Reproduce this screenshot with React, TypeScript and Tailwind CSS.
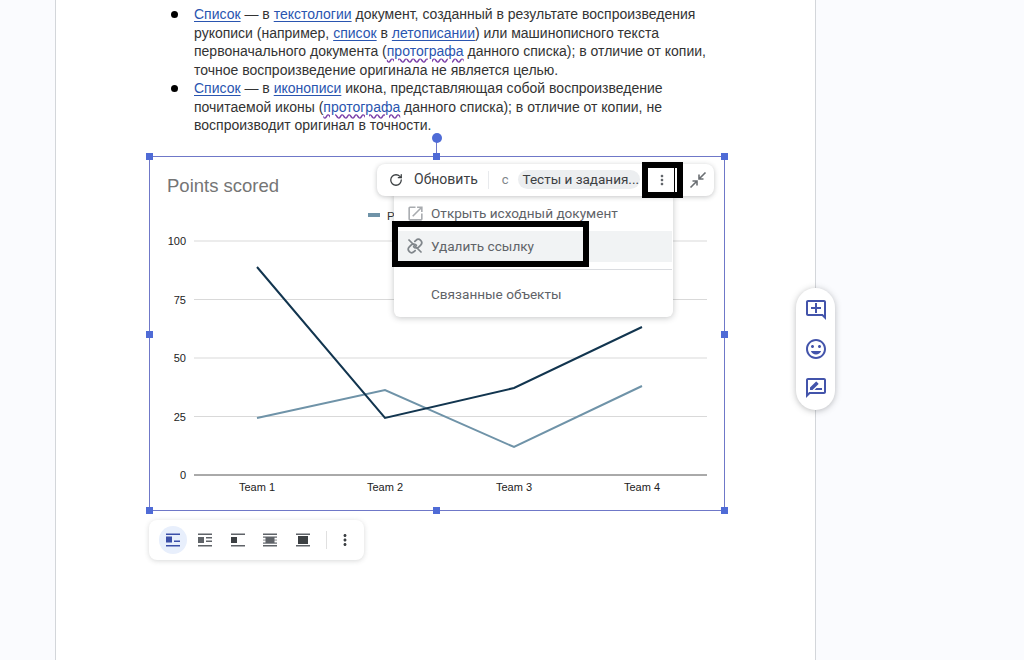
import { RotateCw } from 'lucide-react';
import { MdOutlineAddComment, MdOutlineInsertEmoticon, MdOutlineRateReview, MdOutlineOpenInNew, MdMoreVert } from 'react-icons/md';

const linkClass = 'text-[#2a55b0] underline underline-offset-2';
const misspelled = 'text-[#2a55b0] underline decoration-wavy decoration-[#7a3fa8] underline-offset-2';

function Handle({ className }: { className: string }) {
  return <div className={`absolute w-[7px] h-[7px] bg-[#4f6bd6] ${className}`} />;
}

function Bullet() {
  return <span className="ml-[22px] mt-[6px] mr-[16px] w-[7px] h-[7px] rounded-full bg-black shrink-0" />;
}

function UnlinkIcon() {
  return (
    <svg className="w-[16px] h-[16px] text-[#80868b]" viewBox="0 0 24 24" fill="none" stroke="currentColor" strokeWidth="2.6" strokeLinecap="round">
      <path d="M10 13a5 5 0 0 0 7.54.54l3-3a5 5 0 0 0-7.07-7.07l-1.72 1.71" />
      <path d="M14 11a5 5 0 0 0-7.54-.54l-3 3a5 5 0 0 0 7.07 7.07l1.71-1.71" />
      <path d="M3 3l18 18" />
    </svg>
  );
}

function CollapseIcon() {
  return (
    <svg className="w-[18px] h-[18px] text-[#6b6f73]" viewBox="0 0 18 18" fill="none" stroke="currentColor" strokeWidth="1.6">
      <path d="M16.5 1.5L10 8M10 3.5V8H14.5" />
      <path d="M1.5 16.5L8 10M8 14.5V10H3.5" />
    </svg>
  );
}

function WrapIcon({ kind, active }: { kind: number; active?: boolean }) {
  const c = active ? '#3b4fa8' : '#5f6368';
  return (
    <div className={`w-7 h-7 rounded-full flex items-center justify-center ${active ? 'bg-[#e8effc]' : ''}`}>
      <svg width="16" height="16" viewBox="0 0 16 16">
        {kind === 0 && (
          <g fill={c}>
            <rect x="1" y="1.5" width="14" height="1.5" />
            <rect x="1" y="4.5" width="6" height="6" />
            <rect x="9" y="8.5" width="6" height="1.5" />
            <rect x="1" y="13" width="14" height="1.5" />
          </g>
        )}
        {kind === 1 && (
          <g fill={c}>
            <rect x="1" y="1.5" width="14" height="1.5" />
            <rect x="1" y="5" width="6" height="6" />
            <rect x="9" y="5" width="6" height="1.5" />
            <rect x="9" y="8.5" width="6" height="1.5" />
            <rect x="1" y="13" width="14" height="1.5" />
          </g>
        )}
        {kind === 2 && (
          <g fill={c}>
            <rect x="1" y="1.5" width="14" height="1.5" />
            <rect x="1" y="5" width="6" height="6" fill="#3c4043" />
            <rect x="1" y="13" width="14" height="1.5" />
          </g>
        )}
        {kind === 3 && (
          <g fill={c}>
            <rect x="1" y="1.5" width="14" height="1.5" />
            <rect x="1" y="4.5" width="14" height="1.2" />
            <rect x="3.5" y="5" width="9" height="6" />
            <rect x="1" y="7.5" width="14" height="1.2" fillOpacity="0.6" />
            <rect x="1" y="10.5" width="14" height="1.2" />
            <rect x="1" y="13" width="14" height="1.5" />
          </g>
        )}
        {kind === 4 && (
          <g fill={c}>
            <rect x="1" y="1.5" width="14" height="1.5" />
            <rect x="3" y="4" width="10" height="8" fill="#3c4043" />
            <rect x="1" y="13" width="14" height="1.5" />
          </g>
        )}
      </svg>
    </div>
  );
}

function Chart() {
  const grid = [
    { y: 241, label: '100' },
    { y: 299.5, label: '75' },
    { y: 358, label: '50' },
    { y: 416.5, label: '25' },
  ];
  const teams = [
    { x: 257, label: 'Team 1' },
    { x: 385, label: 'Team 2' },
    { x: 514, label: 'Team 3' },
    { x: 642, label: 'Team 4' },
  ];
  return (
    <svg className="block w-full h-full" viewBox="150 157 574 353" fontFamily="'Liberation Sans', sans-serif">
      <text x="167" y="192" fontSize="18.5" fill="#757575">Points scored</text>
      <rect x="368" y="213" width="12" height="4" fill="#6f93a8" />
      <text x="387" y="220" fontSize="11.5" fill="#333">P</text>
      {grid.map((g) => (
        <g key={g.y}>
          <line x1="194" x2="707" y1={g.y} y2={g.y} stroke="#d9d9d9" />
          <text x="186" y={g.y + 4} fontSize="11" fill="#222" textAnchor="end">{g.label}</text>
        </g>
      ))}
      <line x1="194" x2="707" y1="475" y2="475" stroke="#555" />
      <text x="186" y="479" fontSize="11" fill="#222" textAnchor="end">0</text>
      <polyline points="257,418 385,390 514,447 642,386" fill="none" stroke="#6f93a8" strokeWidth="2" />
      <polyline points="257,267 385,418 514,388 642,327" fill="none" stroke="#12354f" strokeWidth="2" />
      {teams.map((t) => (
        <text key={t.x} x={t.x} y="491" fontSize="11" fill="#222" textAnchor="middle">{t.label}</text>
      ))}
    </svg>
  );
}

export default function App() {
  return (
    <div className="relative w-[1024px] h-[660px] overflow-hidden bg-[#fafbfe] font-['Liberation_Sans',sans-serif]">
      <div className="ml-[55px] w-[761px] h-full bg-white border-x border-[#d3d6da] pt-[5px] pl-[93px]">
        <ul className="w-[561px] text-[14px] leading-[18.5px] text-[#333]">
          <li className="flex">
            <Bullet />
            <span>
              <span className={linkClass}>Список</span> — в <span className={linkClass}>текстологии</span> документ, созданный в результате воспроизведения рукописи (например, <span className={linkClass}>список</span> в <span className={linkClass}>летописании</span>) или машинописного текста первоначального документа (<span className={misspelled}>протографа</span> данного списка); в отличие от копии, точное воспроизведение оригинала не является целью.
            </span>
          </li>
          <li className="flex">
            <Bullet />
            <span>
              <span className={linkClass}>Список</span> — в <span className={linkClass}>иконописи</span> икона, представляющая собой воспроизведение почитаемой иконы (<span className={misspelled}>протографа</span> данного списка); в отличие от копии, не воспроизводит оригинал в точности.
            </span>
          </li>
        </ul>

        {/* selected chart */}
        <div className="relative mt-[21px] w-[576px] h-[355px] border border-[#6f78c8]">
          <Chart />

          <div className="absolute left-[286px] top-[-19px] w-px h-[19px] bg-[#6f78c8]" />
          <div className="absolute left-[282px] top-[-24px] w-[10px] h-[10px] rounded-full bg-[#4f6bd6]" />
          <Handle className="left-[-4px] top-[-4px]" />
          <Handle className="left-[283px] top-[-4px]" />
          <Handle className="right-[-4px] top-[-4px]" />
          <Handle className="left-[-4px] top-[174px]" />
          <Handle className="right-[-4px] top-[174px]" />
          <Handle className="left-[-4px] bottom-[-4px]" />
          <Handle className="left-[283px] bottom-[-4px]" />
          <Handle className="right-[-4px] bottom-[-4px]" />

          {/* linked chart menu */}
          <div className="absolute left-[244px] top-[33px] w-[279px] h-[127px] bg-white rounded-md shadow-[0_1px_6px_rgba(60,64,67,0.3)] font-['Roboto',sans-serif] text-[13.6px] text-[#5f6368] pt-[14px] flex flex-col">
            <div className="flex items-center h-[20px] pl-[12px]">
              <MdOutlineOpenInNew className="w-[19px] h-[19px] text-[#a8abaf]" />
              <span className="ml-[6px]">Открыть исходный документ</span>
            </div>
            <div className="flex items-center h-[31px] mt-[7px] pl-[13px] bg-[#f1f3f4] mr-px">
              <UnlinkIcon />
              <span className="ml-[8px]">Удалить ссылку</span>
            </div>
            <div className="ml-[36px] mr-px mt-[7px] h-px bg-[#dadce0]" />
            <div className="flex items-center h-[20px] mt-[15px] pl-[37px]">Связанные объекты</div>
          </div>

          {/* linked chart toolbar */}
          <div className="absolute left-[227px] top-[7px] w-[337px] h-[32px] bg-white rounded-lg shadow-[0_1px_5px_rgba(60,64,67,0.3)] flex items-center font-['Roboto',sans-serif] text-[14px]">
            <RotateCw className="ml-[12px] w-[14px] h-[14px] text-[#3c4043]" strokeWidth={2.2} />
            <span className="ml-[11px] text-[#3c4043]">Обновить</span>
            <div className="ml-[10px] w-px h-[18px] bg-[#e8eaed]" />
            <span className="ml-[13px] text-[#80868b] text-[13px]">c</span>
            <span className="ml-[9px] w-[122px] h-[19px] rounded-full bg-[#eceef0] text-[#3c4043] text-[13.5px] pl-[5px] leading-[19px] whitespace-nowrap">Тесты и задания...</span>
            <MdMoreVert className="ml-[14px] w-[16px] h-[16px] text-[#5f6368]" />
            <div className="ml-[19px]"><CollapseIcon /></div>
          </div>

          {/* black marks drawn over the screenshot */}
          <div className="absolute left-[492px] top-[5px] w-[41px] h-[36px] border-[6px] border-black">
            <div className="absolute right-[2px] top-0 w-px h-full bg-black" />
          </div>
          <div className="absolute left-[242px] top-[64px] w-[197px] h-[46px] border-[6px] border-black" />
        </div>

        {/* text wrap toolbar */}
        <div className="mt-[9px] w-[215px] h-[40px] bg-white rounded-lg shadow-[0_1px_5px_rgba(60,64,67,0.2)] flex items-center pl-[10px]">
          <WrapIcon kind={0} active />
          <div className="ml-[4px] flex gap-[4.5px]">
            <WrapIcon kind={1} />
            <WrapIcon kind={2} />
            <WrapIcon kind={3} />
            <WrapIcon kind={4} />
          </div>
          <div className="ml-[9px] w-px h-[18px] bg-[#e0e0e0]" />
          <MdMoreVert className="ml-[9px] w-[18px] h-[18px] text-[#3c4043]" />
        </div>
      </div>

      {/* side actions */}
      <div className="absolute left-[796px] top-[288px] w-[39px] h-[122px] rounded-full bg-white shadow-[0_1px_6px_rgba(60,64,67,0.35)] flex flex-col items-center justify-center gap-[15px] text-[#4354ab]">
        <MdOutlineAddComment className="w-[24px] h-[24px]" />
        <MdOutlineInsertEmoticon className="w-[24px] h-[24px]" />
        <MdOutlineRateReview className="w-[24px] h-[24px]" />
      </div>
    </div>
  );
}
